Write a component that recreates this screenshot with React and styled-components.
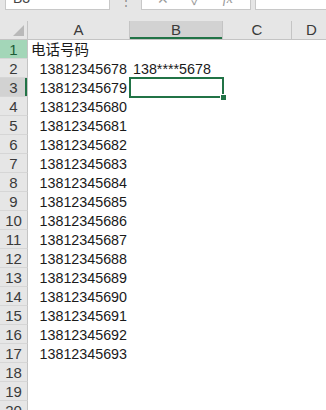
import React from "react";
import styled, { createGlobalStyle } from "styled-components";

const GlobalStyle = createGlobalStyle`
  body {
    margin: 0;
    background: #ffffff;
    font-family: "Liberation Sans", "Noto Sans CJK SC", sans-serif;
  }
`;

const columns = [
  { key: "A", width: 102 },
  { key: "B", width: 93 },
  { key: "C", width: 69 },
  { key: "D", width: 40 },
];

const numbers = Array.from({ length: 16 }, (_, i) => String(13812345678 + i));

const rows = [
  { A: { text: "电话号码", cjk: true } },
  ...numbers.map((n, i) =>
    i === 0
      ? { A: { text: n, align: "right" }, B: { text: "138****5678" } }
      : { A: { text: n, align: "right" } }
  ),
  {},
  {},
  {},
];

function App() {
  return (
    <>
      <GlobalStyle />
      <Sheet>
        <FormulaBar>
          <NameBox>B3</NameBox>
          <Dots>⋮</Dots>
          <FuncBox>
            <FuncIcon>✕</FuncIcon>
            <FuncIcon>✓</FuncIcon>
            <FuncIcon $italic>fx</FuncIcon>
          </FuncBox>
          <FormulaInput />
        </FormulaBar>
        <HeaderRow>
          <Corner>
            <svg width="11" height="11" viewBox="0 0 11 11">
              <polygon points="11,0 11,11 0,11" fill="#b9b9b9" />
            </svg>
          </Corner>
          {columns.map((c) => (
            <ColHeader key={c.key} style={{ width: c.width }} $active={c.key === "B"}>
              {c.key}
            </ColHeader>
          ))}
        </HeaderRow>
        {rows.map((row, i) => (
          <Row key={i}>
            <RowHeader $green={i === 0} $active={i === 2}>
              {i + 1}
            </RowHeader>
            {columns.map((c) => {
              const cell = row[c.key];
              return (
                <Cell
                  key={c.key}
                  style={{ width: c.width }}
                  $align={cell && cell.align}
                  $cjk={cell && cell.cjk}
                  $selected={i === 2 && c.key === "B"}
                >
                  {cell ? cell.text : ""}
                </Cell>
              );
            })}
          </Row>
        ))}
      </Sheet>
    </>
  );
}

const Sheet = styled.div`
  width: 326px;
  height: 410px;
  overflow: hidden;
  display: flex;
  flex-direction: column;
  background: #ffffff;
`;

const FormulaBar = styled.div`
  height: 21px;
  flex-shrink: 0;
  display: flex;
  align-items: flex-start;
  background: #e6e6e6;
  overflow: hidden;
`;

const NameBox = styled.div`
  margin-left: 5px;
  margin-top: -13px;
  width: 105px;
  height: 23px;
  box-sizing: border-box;
  background: #ffffff;
  border: 1px solid #c8c8c8;
  padding-left: 7px;
  font-size: 14px;
  line-height: 21px;
  color: #444;
`;

const Dots = styled.div`
  width: 31px;
  text-align: center;
  font-size: 12px;
  line-height: 6px;
  margin-top: -2px;
  color: #8a8a8a;
`;

const FuncBox = styled.div`
  width: 110px;
  height: 23px;
  margin-top: -13px;
  box-sizing: border-box;
  background: #ffffff;
  border: 1px solid #c8c8c8;
  display: flex;
  align-items: center;
  justify-content: space-around;
  padding: 0 6px 0 4px;
`;

const FuncIcon = styled.span`
  font-size: 14px;
  color: #9a9a9a;
  font-style: ${(p) => (p.$italic ? "italic" : "normal")};
  font-family: ${(p) => (p.$italic ? '"Liberation Serif", serif' : "inherit")};
`;

const FormulaInput = styled.div`
  flex: 1;
  margin-left: 4px;
  height: 23px;
  margin-top: -13px;
  box-sizing: border-box;
  background: #ffffff;
  border: 1px solid #c8c8c8;
  border-right: none;
`;

const HeaderRow = styled.div`
  display: flex;
  height: 18px;
  flex-shrink: 0;
  background: #e6e6e6;
  border-bottom: 1px solid #c4c4c4;
`;

const Corner = styled.div`
  width: 28px;
  flex-shrink: 0;
  box-sizing: border-box;
  border-right: 1px solid #c4c4c4;
  display: flex;
  align-items: flex-end;
  justify-content: flex-end;
  padding: 0 3px 3px 0;
`;

const ColHeader = styled.div`
  flex-shrink: 0;
  box-sizing: border-box;
  border-right: 1px solid #c4c4c4;
  text-align: center;
  font-size: 15px;
  line-height: 18px;
  color: #3a3a3a;
  background: ${(p) => (p.$active ? "#d2d2d2" : "transparent")};
  box-shadow: ${(p) => (p.$active ? "inset 0 -2px 0 #217346" : "none")};
`;

const Row = styled.div`
  display: flex;
  height: 19px;
  flex-shrink: 0;
`;

const RowHeader = styled.div`
  width: 28px;
  flex-shrink: 0;
  box-sizing: border-box;
  border-right: 1px solid #c4c4c4;
  border-bottom: 1px solid #d6d6d6;
  background: ${(p) => (p.$green ? "#a3d6b8" : p.$active ? "#d2d2d2" : "#e6e6e6")};
  box-shadow: ${(p) => (p.$active ? "inset -2px 0 0 #217346" : "none")};
  color: ${(p) => (p.$green ? "#1d5c36" : "#3a3a3a")};
  text-align: center;
  font-size: 15px;
  line-height: 19px;
`;

const Cell = styled.div`
  flex-shrink: 0;
  position: relative;
  box-sizing: border-box;
  padding: 0 3px;
  white-space: nowrap;
  display: flex;
  align-items: flex-end;
  justify-content: ${(p) => (p.$align === "right" ? "flex-end" : "flex-start")};
  font-size: ${(p) => (p.$cjk ? "14.5px" : "14.3px")};
  line-height: 18px;
  color: #1a1a1a;
  ${(p) =>
    p.$selected &&
    `
    outline: 2px solid #217346;
    outline-offset: -1px;
    z-index: 1;
    &::after {
      content: "";
      position: absolute;
      right: -4px;
      bottom: -4px;
      width: 5px;
      height: 5px;
      background: #217346;
      border: 1px solid #ffffff;
    }
  `}
`;

export default App;
